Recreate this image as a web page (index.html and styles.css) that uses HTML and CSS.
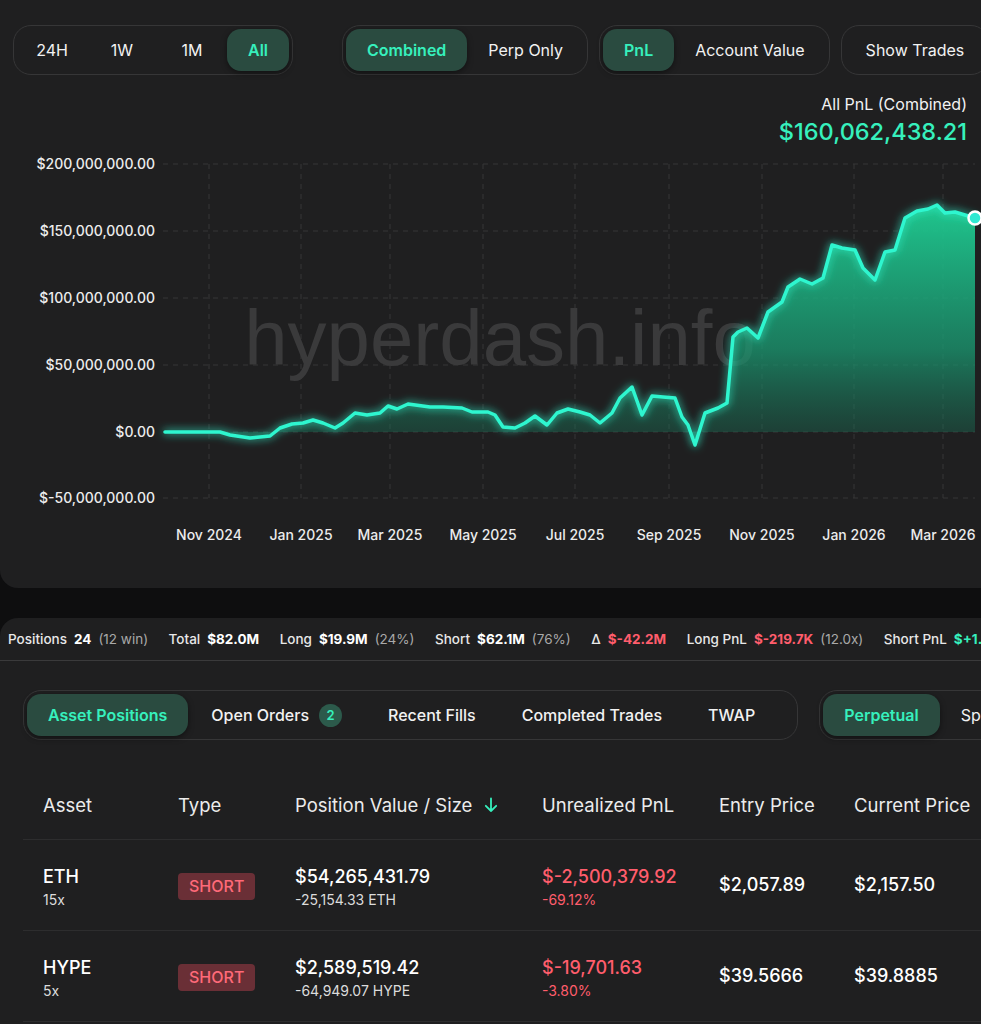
FILE: index.html
```html
<!DOCTYPE html>
<html>
<head>
  <meta charset="utf-8">
  <title>Hyperdash - Trader</title>
  <link rel="stylesheet" href="styles.css">
</head>
<body>
  <!-- chart card -->
  <div class="chart-card">
    <div class="toolbar">
      <div class="seg seg-time">
        <button class="seg-btn">24H</button>
        <button class="seg-btn">1W</button>
        <button class="seg-btn">1M</button>
        <button class="seg-btn active">All</button>
      </div>
      <div class="seg seg-wide">
        <button class="seg-btn active">Combined</button>
        <button class="seg-btn">Perp Only</button>
      </div>
      <div class="seg">
        <button class="seg-btn active">PnL</button>
        <button class="seg-btn">Account Value</button>
      </div>
      <div class="seg">
        <button class="seg-btn">Show Trades</button>
      </div>
    </div>

    <div class="pnl-summary">
      <div class="pnl-label">All PnL (Combined)</div>
      <div class="pnl-value">$160,062,438.21</div>
    </div>

    <svg class="chart" viewBox="0 149 981 411" width="981" height="411">
      <defs>
        <linearGradient id="areaFill" gradientUnits="userSpaceOnUse" x1="0" y1="205" x2="0" y2="445">
          <stop offset="0" stop-color="#1fcf94" stop-opacity="0.95"/>
          <stop offset="0.6" stop-color="#1a9a72" stop-opacity="0.75"/>
          <stop offset="1" stop-color="#1a6a52" stop-opacity="0.35"/>
        </linearGradient>
        <filter id="glow" x="-5%" y="-20%" width="110%" height="140%">
          <feGaussianBlur stdDeviation="4" result="blur"/>
          <feMerge>
            <feMergeNode in="blur"/>
            <feMergeNode in="SourceGraphic"/>
          </feMerge>
        </filter>
      </defs>

      <g class="grid">
        <line x1="163" y1="164" x2="975" y2="164"/>
        <line x1="163" y1="231" x2="975" y2="231"/>
        <line x1="163" y1="298" x2="975" y2="298"/>
        <line x1="163" y1="365" x2="975" y2="365"/>
        <line x1="163" y1="432" x2="975" y2="432"/>
        <line x1="163" y1="498" x2="975" y2="498"/>
        <line x1="209" y1="164" x2="209" y2="498"/>
        <line x1="301" y1="164" x2="301" y2="498"/>
        <line x1="390" y1="164" x2="390" y2="498"/>
        <line x1="483" y1="164" x2="483" y2="498"/>
        <line x1="575" y1="164" x2="575" y2="498"/>
        <line x1="669" y1="164" x2="669" y2="498"/>
        <line x1="762" y1="164" x2="762" y2="498"/>
        <line x1="854" y1="164" x2="854" y2="498"/>
        <line x1="943" y1="164" x2="943" y2="498"/>
      </g>

      <text class="watermark" x="500" y="365" text-anchor="middle">hyperdash.info</text>

      <g class="y-labels">
        <text x="155" y="169">$200,000,000.00</text>
        <text x="155" y="236">$150,000,000.00</text>
        <text x="155" y="303">$100,000,000.00</text>
        <text x="155" y="370">$50,000,000.00</text>
        <text x="155" y="437">$0.00</text>
        <text x="155" y="503">$-50,000,000.00</text>
      </g>
      <g class="x-labels">
        <text x="209" y="540">Nov 2024</text>
        <text x="301" y="540">Jan 2025</text>
        <text x="390" y="540">Mar 2025</text>
        <text x="483" y="540">May 2025</text>
        <text x="575" y="540">Jul 2025</text>
        <text x="669" y="540">Sep 2025</text>
        <text x="762" y="540">Nov 2025</text>
        <text x="854" y="540">Jan 2026</text>
        <text x="943" y="540">Mar 2026</text>
      </g>

      <path class="area" d="M165,432 L220,432 L230,435 L250,438 L270,436 L280,428 L292,424 L303,423 L313,420 L323,423 L335,428 L343,423 L355,413 L367,415 L380,413 L388,406 L397,409 L408,404 L430,407 L443,407 L462,408 L472,412 L488,412 L495,415 L503,427 L515,428 L525,423 L535,416 L547,425 L557,413 L568,409 L580,412 L590,415 L600,423 L612,413 L620,398 L632,387 L642,415 L652,396 L663,397 L675,398 L682,417 L688,425 L695,445 L705,413 L718,408 L727,403 L733,337 L738,332 L747,328 L758,338 L768,312 L782,302 L788,287 L800,279 L812,284 L823,278 L832,245 L842,248 L855,250 L863,268 L875,280 L885,252 L895,250 L905,218 L917,211 L928,209 L937,205 L945,213 L955,212 L975,218 L975,432 Z"/>
      <path class="line" filter="url(#glow)" d="M165,432 L220,432 L230,435 L250,438 L270,436 L280,428 L292,424 L303,423 L313,420 L323,423 L335,428 L343,423 L355,413 L367,415 L380,413 L388,406 L397,409 L408,404 L430,407 L443,407 L462,408 L472,412 L488,412 L495,415 L503,427 L515,428 L525,423 L535,416 L547,425 L557,413 L568,409 L580,412 L590,415 L600,423 L612,413 L620,398 L632,387 L642,415 L652,396 L663,397 L675,398 L682,417 L688,425 L695,445 L705,413 L718,408 L727,403 L733,337 L738,332 L747,328 L758,338 L768,312 L782,302 L788,287 L800,279 L812,284 L823,278 L832,245 L842,248 L855,250 L863,268 L875,280 L885,252 L895,250 L905,218 L917,211 L928,209 L937,205 L945,213 L955,212 L975,218"/>
      <circle class="end-dot" cx="975" cy="218" r="6.5"/>
    </svg>
  </div>

  <!-- positions panel -->
  <div class="positions-panel">
    <div class="stats">
      <span class="stat"><span class="stat-label">Positions</span><b>24</b><span class="note">(12 win)</span></span>
      <span class="stat"><span class="stat-label">Total</span><b>$82.0M</b></span>
      <span class="stat"><span class="stat-label">Long</span><b>$19.9M</b><span class="note">(24%)</span></span>
      <span class="stat"><span class="stat-label">Short</span><b>$62.1M</b><span class="note">(76%)</span></span>
      <span class="stat"><span class="stat-label">Δ</span><b class="neg">$-42.2M</b></span>
      <span class="stat"><span class="stat-label">Long PnL</span><b class="neg">$-219.7K</b><span class="note">(12.0x)</span></span>
      <span class="stat"><span class="stat-label">Short PnL</span><b class="pos">$+1.3M</b><span class="note">(3.2x)</span></span>
    </div>

    <div class="tabs-row">
      <div class="seg seg-tabs">
        <button class="seg-btn active">Asset Positions</button>
        <button class="seg-btn">Open Orders <span class="count">2</span></button>
        <button class="seg-btn">Recent Fills</button>
        <button class="seg-btn">Completed Trades</button>
        <button class="seg-btn">TWAP</button>
      </div>
      <div class="seg">
        <button class="seg-btn active">Perpetual</button>
        <button class="seg-btn">Spot</button>
      </div>
    </div>

    <div class="positions">
      <div class="pos-row pos-head">
        <div>Asset</div>
        <div>Type</div>
        <div class="sortable">Position Value / Size
          <svg class="sort-arrow" width="14" height="16" viewBox="0 0 14 16"><path d="M7 1.5 V14 M1.8 8.8 L7 14 L12.2 8.8"/></svg>
        </div>
        <div>Unrealized PnL</div>
        <div>Entry Price</div>
        <div>Current Price</div>
      </div>

      <div class="pos-row">
        <div class="stack">
          <div class="main">ETH</div>
          <div class="sub">15x</div>
        </div>
        <div><span class="side-tag">SHORT</span></div>
        <div class="stack">
          <div class="main">$54,265,431.79</div>
          <div class="sub">-25,154.33 ETH</div>
        </div>
        <div class="stack">
          <div class="main neg">$-2,500,379.92</div>
          <div class="sub neg">-69.12%</div>
        </div>
        <div class="main">$2,057.89</div>
        <div class="main">$2,157.50</div>
      </div>

      <div class="pos-row">
        <div class="stack">
          <div class="main">HYPE</div>
          <div class="sub">5x</div>
        </div>
        <div><span class="side-tag">SHORT</span></div>
        <div class="stack">
          <div class="main">$2,589,519.42</div>
          <div class="sub">-64,949.07 HYPE</div>
        </div>
        <div class="stack">
          <div class="main neg">$-19,701.63</div>
          <div class="sub neg">-3.80%</div>
        </div>
        <div class="main">$39.5666</div>
        <div class="main">$39.8885</div>
      </div>
    </div>
  </div>
</body>
</html>
```

FILE: styles.css
```css
:root {
    --page-bg: #0e0e0f;
    --card-bg: #1f1f20;
    --border: #363637;
    --row-border: #2d2d2e;
    --text: #f2f2f2;
    --muted: #a9a9a9;
    --green: #36f0bd;
    --green-pill: #2a4b40;
    --red: #ff5d6c;
}

body {
    margin: 0;
    background: var(--page-bg);
    color: var(--text);
    font-family: Inter, "Noto Sans", sans-serif;
    overflow: hidden;
}

button {
    font-family: inherit;
    border: none;
    background: none;
    cursor: pointer;
}

/* 图表卡片 */
.chart-card {
    background: var(--card-bg);
    border-bottom-left-radius: 18px;
    padding-bottom: 28px;
}

.toolbar {
    display: flex;
    gap: 11px;
    padding: 25px 0 0 13px;
    white-space: nowrap;
}

.seg {
    display: flex;
    flex-shrink: 0;
    height: 50px;
    box-sizing: border-box;
    padding: 3px;
    border: 1px solid var(--border);
    border-radius: 18px;
}

.seg-wide {
    margin-left: 38px;
}

.seg-btn {
    display: flex;
    align-items: center;
    justify-content: center;
    padding: 0 21px;
    border-radius: 14px;
    font-size: 16px;
    font-weight: 400;
    color: var(--text);
}

.seg-time .seg-btn {
    width: 70px;
    padding: 0;
}

.seg-time .seg-btn.active {
    width: 62px;
}

.seg-btn.active {
    background: var(--green-pill);
    color: var(--green);
    font-weight: 600;
    box-shadow: 0 2px 6px rgba(0, 0, 0, 0.45);
}

.pnl-summary {
    margin-top: 18px;
    padding-right: 14px;
    text-align: right;
}

.pnl-label {
    font-size: 16px;
    line-height: 22px;
}

.pnl-value {
    font-size: 23.5px;
    line-height: 34px;
    font-weight: 500;
    color: var(--green);
}

.chart {
    display: block;
}

.grid line {
    stroke: #363637;
    stroke-width: 1;
    stroke-dasharray: 5 5;
}

.watermark {
    font-family: "Liberation Sans", Arial, sans-serif;
    font-size: 78px;
    fill: #3a3a3b;
}

.y-labels text {
    font-size: 14px;
    font-weight: 500;
    fill: #ececec;
    text-anchor: end;
}

.x-labels text {
    font-size: 14px;
    font-weight: 500;
    fill: #ececec;
    text-anchor: middle;
}

.area {
    fill: url(#areaFill);
}

.line {
    fill: none;
    stroke: #2ff6cf;
    stroke-width: 3.5;
    stroke-linejoin: round;
    stroke-linecap: round;
}

.end-dot {
    fill: #2fe9d2;
    stroke: #ffffff;
    stroke-width: 2.5;
}

/* 持仓面板 */
.positions-panel {
    margin-top: 30px;
    background: var(--card-bg);
    border-top-left-radius: 18px;
    min-height: 420px;
}

.stats {
    display: flex;
    align-items: center;
    height: 42px;
    padding-left: 8px;
    border-bottom: 1px solid #3a3a3b;
    font-size: 13.5px;
    white-space: nowrap;
}

.stat {
    display: flex;
    gap: 7px;
    margin-right: 20.5px;
    flex-shrink: 0;
}

.stat-label {
    font-weight: 500;
    color: #e8e8e8;
}

.stat b {
    font-weight: 700;
    color: #fff;
}

.stat .note {
    color: var(--muted);
}

.stat b.neg,
.neg {
    color: var(--red);
}

.stat b.pos {
    color: var(--green);
}

.tabs-row {
    display: flex;
    gap: 21px;
    padding: 29px 0 0 23px;
    white-space: nowrap;
}

.seg-tabs {
    padding-right: 19px;
}

.seg-tabs .seg-btn {
    padding: 0 23px;
    font-weight: 500;
}

.seg-tabs .seg-btn.active {
    padding: 0 21px;
    font-weight: 600;
}

.count {
    display: inline-flex;
    align-items: center;
    justify-content: center;
    width: 23px;
    height: 23px;
    margin-left: 10px;
    border-radius: 50%;
    background: #2c5a4b;
    color: var(--green);
    font-size: 13px;
    font-weight: 600;
}

/* 持仓表格 */
.positions {
    margin: 30px 0 0 23px;
}

.pos-row {
    display: grid;
    grid-template-columns: 135px 117px 247px 177px 135px 1fr;
    align-items: center;
    height: 90px;
    padding-left: 20px;
    border-bottom: 1px solid var(--row-border);
}

.pos-head {
    height: 69px;
    font-size: 18.5px;
    font-weight: 400;
    color: #ececec;
}

.sortable {
    display: flex;
    align-items: center;
}

.sort-arrow {
    margin-left: 12px;
    fill: none;
    stroke: var(--green);
    stroke-width: 1.8;
    stroke-linecap: round;
    stroke-linejoin: round;
}

.stack {
    padding-top: 5px;
}

.main {
    font-size: 18px;
    line-height: 22px;
    font-weight: 500;
    color: #fff;
}

.sub {
    margin-top: 3px;
    font-size: 14px;
    line-height: 18px;
    color: #dcdcdc;
}

.main.neg,
.sub.neg {
    color: var(--red);
}

.side-tag {
    display: inline-block;
    margin-top: 2px;
    padding: 3px 11px;
    border-radius: 4px;
    background: #6a2f36;
    color: #ff6a79;
    font-size: 16px;
    line-height: 21px;
    font-weight: 500;
}
```
